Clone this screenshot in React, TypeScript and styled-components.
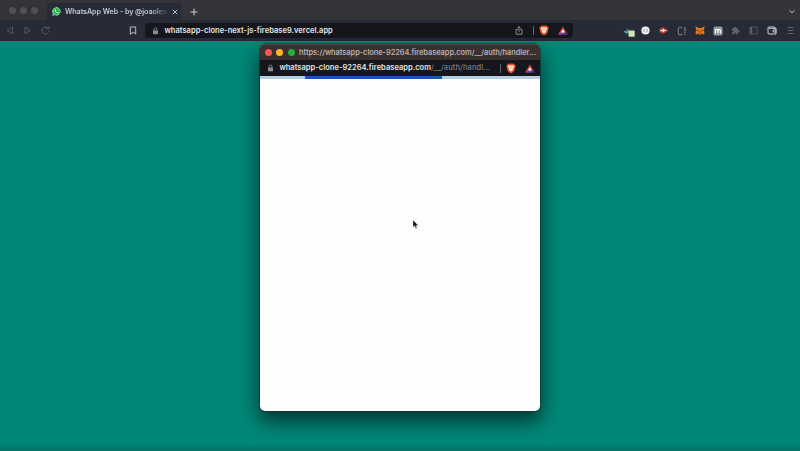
import React from "react";
import styled, { createGlobalStyle } from "styled-components";

const Global = createGlobalStyle`
  * { box-sizing: border-box; }
  body { margin: 0; overflow: hidden; background: #018777; font-family: Inter, "Liberation Sans", sans-serif; }
  svg { display: block; flex: none; }
`;

const Screen = styled.div`
  width: 800px;
  height: 451px;
  display: flex;
  flex-direction: column;
  overflow: hidden;
`;

const TabStrip = styled.header`
  height: 20px;
  flex: none;
  display: flex;
  align-items: flex-end;
  background: #343339;
`;

const Lights = styled.div<{ $gap: number; $left: number }>`
  display: flex;
  gap: ${(p) => p.$gap}px;
  padding-left: ${(p) => p.$left}px;
`;

const StripLights = styled(Lights)`
  width: 47px;
  align-self: center;
`;

const Light = styled.i<{ $color: string }>`
  width: 7px;
  height: 7px;
  border-radius: 50%;
  background: ${(p) => p.$color};
`;

const Tab = styled.div`
  width: 134px;
  height: 17px;
  padding: 0 3px 0 5px;
  display: flex;
  align-items: center;
  background: #272a37;
  border-radius: 3px 3px 0 0;
`;

const TabTitle = styled.span`
  width: 103px;
  margin-left: 4px;
  white-space: nowrap;
  font-size: 7.2px;
  line-height: 12px;
  font-weight: 600;
  letter-spacing: -0.07px;
  color: #c6c6cc;
  mask-image: linear-gradient(90deg, #000 84%, transparent 101%);
`;

const TabClose = styled.div`
  margin-left: 3.5px;
`;

const NewTab = styled.div`
  height: 17px;
  margin-left: 8.5px;
  display: flex;
  align-items: center;
`;

const TabMenu = styled(NewTab)`
  margin: 0 5px 0 auto;
`;

const Toolbar = styled.nav`
  height: 21px;
  flex: none;
  display: flex;
  align-items: center;
  background: #272a37;
`;

const NavButtons = styled.div`
  width: 128px;
  padding-left: 6px;
  display: flex;
  gap: 8px;
`;

const Bookmark = styled.div`
  width: 17px;
`;

const AddressBar = styled.div`
  width: 428px;
  height: 15px;
  padding: 0 5px 0 7px;
  display: flex;
  align-items: center;
  background: #15171d;
  border-radius: 3px;
`;

const Address = styled.span<{ $spacing: number; $left: number }>`
  margin-left: ${(p) => p.$left}px;
  flex: 1;
  min-width: 0;
  white-space: nowrap;
  font-size: 7.5px;
  line-height: 12px;
  font-weight: 600;
  letter-spacing: ${(p) => p.$spacing}px;
  color: #e6e6e8;
`;

const Dim = styled.span`
  font-weight: 500;
  letter-spacing: 0.1px;
  color: #7c7d82;
`;

const Divider = styled.i<{ $left: number; $right: number }>`
  width: 1px;
  height: 9px;
  margin: 0 ${(p) => p.$right}px 0 ${(p) => p.$left}px;
  background: #66676d;
`;

const ShieldGap = styled.i`
  width: 9px;
`;

const Extensions = styled.div`
  margin-left: 45.5px;
  display: grid;
  grid-template-columns: repeat(10, 18px);
  justify-items: center;
  align-items: center;
`;

const Page = styled.main`
  flex: 1;
  display: flex;
  justify-content: center;
  align-items: flex-start;
  padding: 3px 0 0 0.8px;
  background: linear-gradient(#018777 0, #018777 402px, #017164 100%);
`;

const Popup = styled.section`
  width: 280px;
  height: 367px;
  display: flex;
  flex-direction: column;
  overflow: hidden;
  border-radius: 5px;
  background: #fdfdfd;
  box-shadow: 0 0 0 0.5px #142d2b, 0 9px 20px 1px rgba(0, 0, 0, 0.62);
`;

const PopupTitle = styled.div`
  height: 16px;
  flex: none;
  display: flex;
  align-items: center;
  background: #3a3030;
  border-top: 1px solid #514a4a;
`;

const PopupText = styled.span`
  margin-left: 4.3px;
  white-space: nowrap;
  font-size: 7.4px;
  line-height: 12px;
  font-weight: 600;
  letter-spacing: -0.035px;
  color: #b5afaf;
`;

const PopupBar = styled.div`
  height: 16px;
  flex: none;
  padding: 0 5px 0 7px;
  display: flex;
  align-items: center;
  background: #15171d;
`;

const Progress = styled.div`
  height: 3px;
  padding-left: 45px;
  background: #b5cfe1;
`;

const ProgressFill = styled.div`
  width: 137px;
  height: 3px;
  background: #1558ba;
`;

const Pointer = styled.div`
  margin: 140px 0 0 152px;
`;

const Lock = () => (
  <svg width="7" height="8" viewBox="0 0 7 8">
    <path d="M2 4V2.5a1.5 1.5 0 0 1 3 0V4" fill="none" stroke="#8b8c91" strokeWidth="0.9" />
    <rect x="1" y="3.5" width="5" height="3.7" rx="0.5" fill="#8b8c91" />
  </svg>
);

const Brave = () => (
  <svg width="10" height="11" viewBox="0 0 10 11">
    <path d="M2.5.6h5l.7.8 1.1.1.2 1.8-.8 3.9L7.4 9 5 10.5 2.6 9 1.3 7.2.5 3.3l.3-1.8 1-.1z" fill="#e84b25" />
    <path d="m2 2.4 1.5-.2L5 2.6l1.5-.4 1.5.2.4 1.3-1.5 2 .3 1.1L5 8.8 2.8 6.8l.4-1.1-1.6-2z" fill="#fce6d8" />
    <path d="m3 3.7 1.2.4.1 1.2M7 3.7l-1.2.4-.1 1.2" fill="none" stroke="#e86a43" strokeWidth="0.4" />
  </svg>
);

const Bat = () => (
  <svg width="10" height="9" viewBox="0 0 10 9">
    <path d="M5 .3 0 8.6h5V5.8H3.4L5 3.2z" fill="#e33935" />
    <path d="m5 .3 5 8.3-3.4-2.8L5 3.2z" fill="#b5244f" />
    <path d="m0 8.6 3.4-2.1h3.2L10 8.6z" fill="#514bb8" />
    <path d="m5 2.9 2.1 3.6H2.9z" fill="#fff" />
  </svg>
);

const Whatsapp = () => (
  <svg width="9" height="9" viewBox="0 0 9 9">
    <path d="M.3 8.7.9 6.5a4.1 4.1 0 1 1 1.7 1.6z" fill="#d9f5df" />
    <circle cx="4.55" cy="4.4" r="3.45" fill="#29b653" />
    <path d="m1.1 7.9.5-2 1.5 1.5z" fill="#29b653" />
    <path d="M3.2 2.5c-.6.4-.6 1.2 0 2.1.9 1.3 2.3 2 3 1.5.4-.3.4-.6.3-.7l-.9-.5-.5.5c-.8-.3-1.3-.8-1.6-1.5l.4-.5-.3-.9z" fill="#fff" />
  </svg>
);

const Outline = styled.svg.attrs({ fill: "none", strokeLinejoin: "round", strokeLinecap: "round" })<{ $c: string; $w?: number }>`
  stroke: ${(p) => p.$c};
  stroke-width: ${(p) => p.$w ?? 1};
`;

export default function App() {
  return (
    <>
      <Global />
      <Screen>
        <TabStrip>
          <StripLights $gap={4} $left={9}>
            <Light $color="#505055" />
            <Light $color="#505055" />
            <Light $color="#505055" />
          </StripLights>
          <Tab>
            <Whatsapp />
            <TabTitle>WhatsApp Web - by @joaolessa</TabTitle>
            <TabClose>
              <Outline $c="#b8b9c0" width="6" height="6" viewBox="0 0 6 6"><path d="m1 1 4 4M5 1 1 5" /></Outline>
            </TabClose>
          </Tab>
          <NewTab>
            <Outline $c="#d0d0d4" width="8" height="8" viewBox="0 0 8 8"><path d="M4 1v6M1 4h6" /></Outline>
          </NewTab>
          <TabMenu>
            <Outline $c="#d0d0d4" width="6" height="5" viewBox="0 0 6 5"><path d="m1 1.8 2 2 2-2" /></Outline>
          </TabMenu>
        </TabStrip>

        <Toolbar>
          <NavButtons>
            <Outline $c="#5c5e68" $w={0.9} width="9" height="9" viewBox="0 0 9 9"><path d="M6.5 1.3v6.4L1.5 4.5z" /></Outline>
            <Outline $c="#5c5e68" $w={0.9} width="9" height="9" viewBox="0 0 9 9"><path d="M2 1.3v6.4l4.8-3.2z" /></Outline>
            <Outline $c="#5c5e68" $w={0.9} width="12" height="9" viewBox="0 0 12 9"><path d="M8.4 2.5A3.5 3.5 0 1 0 9 5M9 .7v2.1H6.8" /></Outline>
          </NavButtons>
          <Bookmark>
            <Outline $c="#bdbec5" width="10" height="9" viewBox="0 0 10 9"><path d="M2.7 1h5v7L5.2 6.2 2.7 8z" /></Outline>
          </Bookmark>
          <AddressBar>
            <Lock />
            <Address $left={5.5} $spacing={0.045}>whatsapp-clone-next-js-firebase9.vercel.app</Address>
            <Outline $c="#a4a5a9" $w={0.8} width="8" height="9" viewBox="0 0 8 9"><path d="M2.5 3.5H1v4.7h6V3.5H5.5M4 5.8V.8M2.6 2.1 4 .7l1.4 1.4" /></Outline>
            <Divider $left={10} $right={5} />
            <Brave />
            <ShieldGap />
            <Bat />
          </AddressBar>
          <Extensions>
            <svg width="14" height="12" viewBox="0 0 14 12">
              <path d="m2.5 6 3.5-.4.8-2.8.8 2.6 1.4.4L7.8 8 5 8.5z" fill="#5b87a0" />
              <path d="m2.5 6.2 3 .8.3 1.7z" fill="#38d0b8" />
              <rect x="7.5" y="5.5" width="6.2" height="6.3" rx="1" fill="#cce8b2" />
            </svg>
            <svg width="9" height="9" viewBox="0 0 9 9">
              <circle cx="4.5" cy="4.5" r="4.1" fill="#f4f4f5" />
              <path d="M3.7 2.7c-1.2.2-.4 1.4-1.1 1.8.7.4-.1 1.6 1.1 1.8M5.3 2.7c1.2.2.4 1.4 1.1 1.8-.7.4.1 1.6-1.1 1.8" fill="none" stroke="#565965" strokeWidth="0.6" />
            </svg>
            <svg width="10" height="9" viewBox="0 0 10 9">
              <path d="M.5 2.4h2.7V.7L9.5 4.5 3.2 8.3V6.6H.5z" fill="#d9443d" />
              <path d="M1.6 4.5h5.2M4.4 3v3" stroke="#fff" strokeWidth="1.2" />
            </svg>
            <svg width="10" height="10" viewBox="0 0 10 10">
              <path d="M5.2 2.5C4.8 1.5 4 1 3 1 1.8 1 1.2 2 1.2 5S1.8 9 3 9c1 0 1.8-.5 2.2-1.5" fill="none" stroke="#797b83" strokeWidth="1.1" />
              <path d="M8 1v8" stroke="#797b83" strokeWidth="1.4" strokeDasharray="4.5 .6 1 .6" />
            </svg>
            <svg width="10" height="9" viewBox="0 0 10 9">
              <path d="m.5.3 3.2 1.6h2.6L9.5.3 9 4.2l.5 2.2-.7 2.1-2.4-.7-.7.9H4.3l-.7-.9-2.4.7L.5 6.4 1 4.2z" fill="#df7824" />
              <path d="m.8 4.4 2.5-.2 1 2M9.2 4.4l-2.5-.2-1 2M3.7 7.5h2.6" fill="none" stroke="#813d1a" strokeWidth="0.8" />
            </svg>
            <svg width="10" height="10" viewBox="0 0 10 10">
              <rect x=".4" y=".4" width="9.2" height="9.2" rx="2.2" fill="#96979c" />
              <path d="M2.5 7.3V4.5q0-.9 1.2-.9T5 4.5v2.8-2.8q0-.9 1.2-.9t1.3.9v2.8" fill="none" stroke="#fff" strokeWidth="1.1" />
            </svg>
            <svg width="9" height="9" viewBox="0 0 9 9">
              <path d="M1 2.3h2v-.5a1.1 1.1 0 0 1 2.2 0v.5h1.9v2h.5a1 1 0 0 1 0 2h-.5v2H5.3v-.6a1 1 0 0 0-2 0v.6H1V6.2h.5a.9.9 0 0 0 0-1.8H1z" fill="#60626c" />
            </svg>
            <svg width="9" height="9" viewBox="0 0 9 9">
              <path d="M1 1h7v7H1z" fill="none" stroke="#5a5c67" strokeWidth="0.8" />
              <path d="M1 1h2.2v7H1z" fill="#5a5c67" />
            </svg>
            <Outline $c="#d0d1d5" width="10" height="9" viewBox="0 0 10 9"><path d="M7.7 2.2V1h-6A.8.8 0 0 0 1 1.8V7a1 1 0 0 0 1 1h7V2.3H2M9 4H6.2v2H9" /></Outline>
            <Outline $c="#62646d" width="8" height="9" viewBox="0 0 8 9"><path d="M2 1.5h5M2 4.5h5M2 7.5h5" /></Outline>
          </Extensions>
        </Toolbar>

        <Page>
          <Popup>
            <PopupTitle>
              <Lights $gap={4.5} $left={4.4}>
                <Light $color="#f75650" />
                <Light $color="#fbb62c" />
                <Light $color="#24ae3d" />
              </Lights>
              <PopupText>https://whatsapp-clone-92264.firebaseapp.com/__/auth/handler...</PopupText>
            </PopupTitle>
            <PopupBar>
              <Lock />
              <Address $left={5} $spacing={0.04}>whatsapp-clone-92264.firebaseapp.com<Dim>/__/auth/handl...</Dim></Address>
              <Divider $left={0} $right={5} />
              <Brave />
              <ShieldGap />
              <Bat />
            </PopupBar>
            <Progress><ProgressFill /></Progress>
            <Pointer>
              <svg width="8" height="11" viewBox="0 0 8 11">
                <path d="M1 1v7.3l1.7-1.5 1.1 2.7 1.2-.5-1.1-2.6h2.3z" fill="#111" stroke="#d5d5d8" strokeWidth="0.5" />
              </svg>
            </Pointer>
          </Popup>
        </Page>
      </Screen>
    </>
  );
}
